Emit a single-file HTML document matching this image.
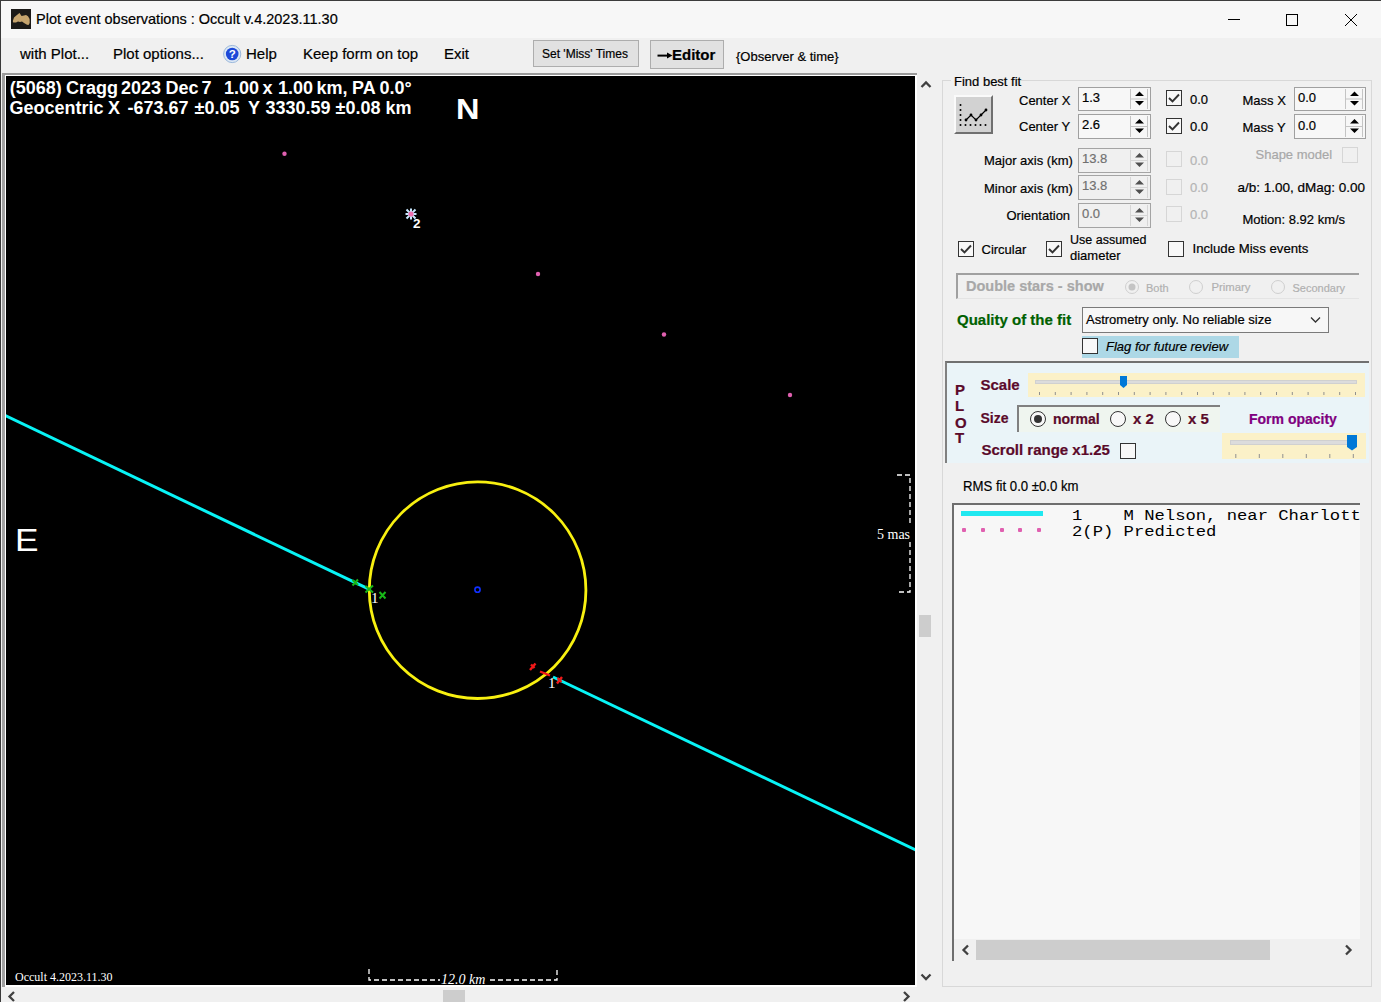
<!DOCTYPE html>
<html><head><meta charset="utf-8">
<style>
*{margin:0;padding:0;box-sizing:border-box}
html,body{width:1381px;height:1002px;overflow:hidden}
body{position:relative;background:#f0f0f0;font-family:"Liberation Sans",sans-serif;color:#000;font-size:13px}
.a{position:absolute;white-space:pre;line-height:1;-webkit-text-stroke:0.2px currentColor}
.nb{-webkit-text-stroke:0}
svg{position:absolute;overflow:visible}
</style></head><body>

<div class="a" style="left:0px;top:0px;width:1381px;height:1px;background:#3c3c3c"></div>
<div class="a" style="left:0px;top:0px;width:1px;height:1002px;background:#3a3a3a"></div>
<div class="a" style="left:1px;top:1px;width:1380px;height:37px;background:#f7f7f7"></div>
<div class="a" style="left:11px;top:9px;width:20px;height:20px;background:#1c1a18"></div>
<svg style="left:11px;top:9px" width="20" height="20"><path d="M1.8 12 L3 8.5 L5 6.8 L7.5 4.8 L8.6 4 L10 6.2 L10.6 7 L13 6.6 L15 6 L17 7.2 L18.6 10 L18.7 14 L17.5 16 L16 15.8 L13 14 L11 12.6 L9 13 L7 12.6 L5 13.4 L2.2 13.6 Z" fill="#c6a46e"/></svg>
<div class="a" style="left:36px;top:12.43px;font-size:14.5px;">Plot event observations : Occult v.4.2023.11.30</div>
<svg style="left:1228px;top:19px" width="13" height="2"><rect x="0" y="0" width="12" height="1" fill="#000"/></svg>
<svg style="left:1286px;top:14px" width="14" height="14"><rect x="0.5" y="0.5" width="11" height="11" fill="none" stroke="#000" stroke-width="1"/></svg>
<svg style="left:1345px;top:14px" width="14" height="14"><path d="M0 0 L12 12 M12 0 L0 12" stroke="#000" stroke-width="1"/></svg>
<div class="a" style="left:20px;top:46.30px;font-size:15px;">with Plot...</div>
<div class="a" style="left:113px;top:46.30px;font-size:15px;">Plot options...</div>
<svg style="left:222px;top:44px" width="20" height="20"><circle cx="10.2" cy="10" r="8.6" fill="#dce8f4" stroke="#9bb8dc" stroke-width="1"/><circle cx="10.2" cy="10" r="6.3" fill="#1c48d8"/><text x="10.2" y="14.2" font-size="11.5" font-weight="bold" fill="#fff" text-anchor="middle" font-family="Liberation Sans">?</text></svg>
<div class="a" style="left:246px;top:46.30px;font-size:15px;">Help</div>
<div class="a" style="left:303px;top:46.30px;font-size:15px;">Keep form on top</div>
<div class="a" style="left:444px;top:46.30px;font-size:15px;">Exit</div>
<div class="a" style="left:533px;top:40px;width:106px;height:27px;background:#e1e1e1;border:1px solid #adadad"></div>
<div class="a" style="left:542px;top:48.34px;font-size:12px;">Set 'Miss' Times</div>
<div class="a" style="left:650px;top:40px;width:74px;height:29px;background:#e1e1e1;border:1px solid #adadad"></div>
<svg style="left:657px;top:50px" width="17" height="12"><path d="M0.5 5.6 L11 5.6" stroke="#000" stroke-width="2"/><path d="M10 2.6 L15.5 5.6 L10 8.6 Z" fill="#000"/></svg>
<div class="a" style="left:672px;top:47.10px;font-size:15px;font-weight:bold">Editor</div>
<div class="a" style="left:736px;top:50.00px;font-size:13px;">{Observer &amp; time}</div>
<div class="a" style="left:2px;top:73px;width:915px;height:914px;background:#fff;border-top:2px solid #9a9a9a;border-left:3px solid #a0a0a0"></div>
<svg style="left:6px;top:76px;overflow:hidden" width="909" height="909" viewBox="6 76 909 909"><rect x="6" y="76" width="909" height="909" fill="#000"/>
<line x1="0" y1="413.1" x2="369.5" y2="589.4" stroke="#08f4f6" stroke-width="3"/>
<line x1="553" y1="677" x2="920" y2="852" stroke="#08f4f6" stroke-width="3"/>
<circle cx="477.6" cy="590.2" r="108.3" fill="none" stroke="#f8f010" stroke-width="2.8"/>
<circle cx="477.5" cy="589.7" r="2.6" fill="none" stroke="#1030ff" stroke-width="1.6"/>
<g fill="#e060b0"><circle cx="284.5" cy="153.8" r="2.2"/><circle cx="538" cy="274" r="2.2"/><circle cx="664" cy="334.5" r="2.2"/><circle cx="790" cy="395" r="2.2"/></g>
<path d="M406.5 209.5 L415.5 218.5 M415.5 209.5 L406.5 218.5 M411 208.5 L411 219.5 M405.5 214 L416.5 214" stroke="#c8e8ff" stroke-width="2"/>
<circle cx="411" cy="214" r="2.6" fill="#f070b0"/>
<text x="413" y="228" font-family="Liberation Sans" font-weight="bold" font-size="13.5" fill="#fff">2</text>
<g stroke="#18b818" stroke-width="2"><path d="M352.5 580 L358 585 M358 579.5 L352.5 585.5"/><path d="M365.5 586 L373 592.5 M373 585.5 L365.5 592.5"/><path d="M379.5 592 L385.5 598.5 M385.5 592 L379.5 598.5"/></g>
<text x="371" y="603" font-family="Liberation Serif" font-size="15" fill="#fff">1</text>
<g stroke="#f01818" stroke-width="2.4"><path d="M530 670 L535.5 663.5 M531 664.5 L534.5 668"/><path d="M540 671.5 L550 675.5"/><path d="M557 683.5 L562 677 M557.5 678 L561.5 682"/></g>
<text x="548" y="688" font-family="Liberation Serif" font-size="15" fill="#fff">1</text>
<text y="94" font-family="Liberation Sans" font-size="18" fill="#fff" font-weight="bold"><tspan x="9.8">(5068)</tspan><tspan x="66">Cragg</tspan><tspan x="121">2023</tspan><tspan x="165.5">Dec</tspan><tspan x="201.5">7</tspan><tspan x="224">1.00</tspan><tspan x="262.5">x</tspan><tspan x="278">1.00</tspan><tspan x="316.5">km,</tspan><tspan x="352">PA</tspan><tspan x="379.5">0.0°</tspan></text>
<text y="113.5" font-family="Liberation Sans" font-size="18" fill="#fff" font-weight="bold"><tspan x="9.5">Geocentric</tspan><tspan x="108">X</tspan><tspan x="127.5">-673.67</tspan><tspan x="194.5">±0.05</tspan><tspan x="248">Y</tspan><tspan x="265.5">3330.59</tspan><tspan x="335.5">±0.08</tspan><tspan x="385.5">km</tspan></text>
<text x="456" y="119" font-family="Liberation Sans" font-weight="bold" font-size="29.5" fill="#fff" textLength="23.5" lengthAdjust="spacingAndGlyphs">N</text>
<text x="15" y="550.5" font-family="Liberation Sans" font-size="30.5" fill="#fff" textLength="23.5" lengthAdjust="spacingAndGlyphs">E</text>
<path d="M897 475 L910 475 L910 592 L897 592" stroke="#fff" stroke-width="1.3" fill="none" stroke-dasharray="5,3"/>
<rect x="876" y="526" width="36" height="16" fill="#000"/>
<text x="877" y="539" font-family="Liberation Serif" font-size="14" fill="#fff">5 mas</text>
<path d="M369 969 L369 980 L440 980 M490 980 L557 980 L557 969" stroke="#fff" stroke-width="1.3" fill="none" stroke-dasharray="5,3"/>
<text x="441" y="984" font-family="Liberation Serif" font-style="italic" font-size="14" fill="#fff">12.0 km</text>
<text x="15" y="981" font-family="Liberation Serif" font-size="12" fill="#fff">Occult 4.2023.11.30</text></svg>
<svg style="left:918px;top:78px" width="16" height="12"><path d="M3.5 9 L8 4.5 L12.5 9" stroke="#404040" stroke-width="2.3" fill="none"/></svg>
<div class="a" style="left:919px;top:615px;width:12px;height:22px;background:#cdcdcd"></div>
<svg style="left:918px;top:971px" width="16" height="12"><path d="M3.5 3.5 L8 8 L12.5 3.5" stroke="#404040" stroke-width="2.3" fill="none"/></svg>
<svg style="left:4px;top:990px" width="14" height="12"><path d="M10 2 L5.5 6.5 L10 11" stroke="#404040" stroke-width="2.3" fill="none"/></svg>
<div class="a" style="left:443px;top:990px;width:22px;height:12px;background:#cdcdcd"></div>
<svg style="left:900px;top:990px" width="14" height="12"><path d="M4 2 L8.5 6.5 L4 11" stroke="#404040" stroke-width="2.3" fill="none"/></svg>
<div class="a" style="left:942px;top:80px;width:430px;height:907px;border:1px solid #d8d8d8"></div>
<div class="a" style="left:951px;top:74px;width:69px;height:13px;background:#f0f0f0"></div>
<div class="a" style="left:954px;top:75.00px;font-size:13px;">Find best fit</div>
<div class="a" style="left:954px;top:95px;width:39px;height:39px;background:#d2d2d2;border:2px solid;border-color:#fafafa #707070 #707070 #fafafa"></div>
<svg style="left:954px;top:95px" width="40" height="40"><g fill="#000"><circle cx="6.5" cy="10" r="1"/><circle cx="6.5" cy="15" r="1"/><circle cx="6.5" cy="20" r="1"/><circle cx="6.5" cy="25" r="1"/><circle cx="6.5" cy="30" r="1"/>
 <circle cx="11.5" cy="30" r="1"/><circle cx="16.5" cy="30" r="1"/><circle cx="21.5" cy="30" r="1"/><circle cx="26.5" cy="30" r="1"/><circle cx="31.5" cy="30" r="1"/>
 <circle cx="12" cy="25" r="1.4"/><circle cx="17" cy="20" r="1.4"/><circle cx="22" cy="25" r="1.4"/><circle cx="27" cy="20" r="1.4"/><circle cx="32" cy="15" r="1.4"/></g>
 <path d="M12 25 L17 20 L22 25 L27 20 L32 15" stroke="#000" stroke-width="1.2" fill="none"/></svg>
<div class="a" style="left:1019px;top:93.70px;font-size:13px;">Center X</div>
<div class="a" style="left:1019px;top:120.30px;font-size:13px;">Center Y</div>
<div class="a" style="left:1078px;top:87px;width:73px;height:24px;background:#f7f7f7;border:1px solid #a0a0a0"></div>
<div class="a" style="left:1082px;top:91.00px;font-size:13px;color:#000">1.3</div>
<svg style="left:1130px;top:87px" width="18" height="24"><rect x="0" y="2" width="1" height="20" fill="#c4c4c4"/><rect x="17" y="2" width="1" height="20" fill="#c4c4c4"/><rect x="1" y="11.5" width="16" height="1" fill="#c4c4c4"/><path d="M5.0 9.0 L9.5 4.5 L14.0 9.0 Z M5.0 14.0 L9.5 18.5 L14.0 14.0 Z" fill="#000"/></svg>
<div class="a" style="left:1078px;top:114px;width:73px;height:25px;background:#f7f7f7;border:1px solid #a0a0a0"></div>
<div class="a" style="left:1082px;top:118.00px;font-size:13px;color:#000">2.6</div>
<svg style="left:1130px;top:114px" width="18" height="25"><rect x="0" y="2" width="1" height="21" fill="#c4c4c4"/><rect x="17" y="2" width="1" height="21" fill="#c4c4c4"/><rect x="1" y="12.0" width="16" height="1" fill="#c4c4c4"/><path d="M5.0 9.5 L9.5 5.0 L14.0 9.5 Z M5.0 14.5 L9.5 19.0 L14.0 14.5 Z" fill="#000"/></svg>
<div class="a" style="left:1166px;top:90px;width:16px;height:16px;background:#f8f8f8;border:1px solid #333"></div>
<svg style="left:1166px;top:90px" width="16" height="16"><path d="M3 8 L6.5 11.5 L13 4.5" stroke="#333" stroke-width="1.9" fill="none"/></svg>
<div class="a" style="left:1166px;top:118px;width:16px;height:16px;background:#f8f8f8;border:1px solid #333"></div>
<svg style="left:1166px;top:118px" width="16" height="16"><path d="M3 8 L6.5 11.5 L13 4.5" stroke="#333" stroke-width="1.9" fill="none"/></svg>
<div class="a" style="left:1190px;top:92.70px;font-size:13px;">0.0</div>
<div class="a" style="left:1190px;top:120.20px;font-size:13px;">0.0</div>
<div class="a" style="left:1242.5px;top:93.80px;font-size:13px;">Mass X</div>
<div class="a" style="left:1242.5px;top:121.00px;font-size:13px;">Mass Y</div>
<div class="a" style="left:1294px;top:87px;width:72px;height:24px;background:#f7f7f7;border:1px solid #a0a0a0"></div>
<div class="a" style="left:1298px;top:91.40px;font-size:13px;color:#000">0.0</div>
<svg style="left:1345px;top:87px" width="18" height="24"><rect x="0" y="2" width="1" height="20" fill="#c4c4c4"/><rect x="17" y="2" width="1" height="20" fill="#c4c4c4"/><rect x="1" y="11.5" width="16" height="1" fill="#c4c4c4"/><path d="M5.0 9.0 L9.5 4.5 L14.0 9.0 Z M5.0 14.0 L9.5 18.5 L14.0 14.0 Z" fill="#000"/></svg>
<div class="a" style="left:1294px;top:114px;width:72px;height:25px;background:#f7f7f7;border:1px solid #a0a0a0"></div>
<div class="a" style="left:1298px;top:118.50px;font-size:13px;color:#000">0.0</div>
<svg style="left:1345px;top:114px" width="18" height="25"><rect x="0" y="2" width="1" height="21" fill="#c4c4c4"/><rect x="17" y="2" width="1" height="21" fill="#c4c4c4"/><rect x="1" y="12.0" width="16" height="1" fill="#c4c4c4"/><path d="M5.0 9.5 L9.5 5.0 L14.0 9.5 Z M5.0 14.5 L9.5 19.0 L14.0 14.5 Z" fill="#000"/></svg>
<div class="a" style="left:984px;top:154.40px;font-size:13px;">Major axis (km)</div>
<div class="a" style="left:984px;top:181.50px;font-size:13px;">Minor axis (km)</div>
<div class="a" style="left:1006.5px;top:208.50px;font-size:13px;">Orientation</div>
<div class="a" style="left:1078px;top:148px;width:73px;height:25px;background:#f0f0f0;border:1px solid #a4a4a4"></div>
<div class="a" style="left:1082px;top:152.30px;font-size:13px;color:#707070">13.8</div>
<svg style="left:1130px;top:148px" width="18" height="25"><rect x="0" y="2" width="1" height="21" fill="#d6d6d6"/><rect x="17" y="2" width="1" height="21" fill="#d6d6d6"/><rect x="1" y="12.0" width="16" height="1" fill="#d6d6d6"/><path d="M5.0 9.5 L9.5 5.0 L14.0 9.5 Z M5.0 14.5 L9.5 19.0 L14.0 14.5 Z" fill="#505050"/></svg>
<div class="a" style="left:1078px;top:175px;width:73px;height:25px;background:#f0f0f0;border:1px solid #a4a4a4"></div>
<div class="a" style="left:1082px;top:179.30px;font-size:13px;color:#707070">13.8</div>
<svg style="left:1130px;top:175px" width="18" height="25"><rect x="0" y="2" width="1" height="21" fill="#d6d6d6"/><rect x="17" y="2" width="1" height="21" fill="#d6d6d6"/><rect x="1" y="12.0" width="16" height="1" fill="#d6d6d6"/><path d="M5.0 9.5 L9.5 5.0 L14.0 9.5 Z M5.0 14.5 L9.5 19.0 L14.0 14.5 Z" fill="#505050"/></svg>
<div class="a" style="left:1078px;top:203px;width:73px;height:25px;background:#f0f0f0;border:1px solid #a4a4a4"></div>
<div class="a" style="left:1082px;top:206.80px;font-size:13px;color:#707070">0.0</div>
<svg style="left:1130px;top:203px" width="18" height="25"><rect x="0" y="2" width="1" height="21" fill="#d6d6d6"/><rect x="17" y="2" width="1" height="21" fill="#d6d6d6"/><rect x="1" y="12.0" width="16" height="1" fill="#d6d6d6"/><path d="M5.0 9.5 L9.5 5.0 L14.0 9.5 Z M5.0 14.5 L9.5 19.0 L14.0 14.5 Z" fill="#505050"/></svg>
<div class="a" style="left:1166px;top:151px;width:16px;height:16px;border:1px solid #d6d6d6"></div>
<div class="a" style="left:1166px;top:179px;width:16px;height:16px;border:1px solid #d6d6d6"></div>
<div class="a" style="left:1166px;top:206px;width:16px;height:16px;border:1px solid #d6d6d6"></div>
<div class="a" style="left:1190px;top:153.50px;font-size:13px;color:#b4b4b4">0.0</div>
<div class="a" style="left:1190px;top:181.00px;font-size:13px;color:#b4b4b4">0.0</div>
<div class="a" style="left:1190px;top:208.00px;font-size:13px;color:#b4b4b4">0.0</div>
<div class="a" style="left:1255.5px;top:148.20px;font-size:13px;color:#a8a8a8">Shape model</div>
<div class="a" style="left:1342px;top:147px;width:16px;height:16px;border:1px solid #d6d6d6"></div>
<div class="a" style="left:1237.5px;top:181.37px;font-size:13.5px;">a/b: 1.00, dMag: 0.00</div>
<div class="a" style="left:1242.5px;top:213.00px;font-size:13px;">Motion: 8.92 km/s</div>
<div class="a" style="left:958px;top:241px;width:16px;height:16px;background:#f8f8f8;border:1px solid #333"></div>
<svg style="left:958px;top:241px" width="16" height="16"><path d="M3 8 L6.5 11.5 L13 4.5" stroke="#333" stroke-width="1.9" fill="none"/></svg>
<div class="a" style="left:981.5px;top:242.60px;font-size:13px;">Circular</div>
<div class="a" style="left:1046px;top:241px;width:16px;height:16px;background:#f8f8f8;border:1px solid #333"></div>
<svg style="left:1046px;top:241px" width="16" height="16"><path d="M3 8 L6.5 11.5 L13 4.5" stroke="#333" stroke-width="1.9" fill="none"/></svg>
<div class="a" style="left:1070px;top:233.92px;font-size:12.5px;">Use assumed</div>
<div class="a" style="left:1070px;top:249.20px;font-size:13px;">diameter</div>
<div class="a" style="left:1168px;top:241px;width:16px;height:16px;background:#f8f8f8;border:1px solid #333"></div>
<div class="a" style="left:1192.5px;top:242.33px;font-size:13.2px;">Include Miss events</div>
<div class="a" style="left:956px;top:273px;width:403px;height:26px;border-top:2px solid #a0a0a0;border-left:2px solid #a0a0a0;border-bottom:1px solid #e4e4e4"></div>
<div class="a" style="left:966px;top:278.73px;font-size:14.5px;font-weight:bold;color:#a8a8a8">Double stars - show</div>
<svg style="left:1124px;top:279px" width="16" height="16"><circle cx="8" cy="8" r="6.5" fill="none" stroke="#cfcfcf" stroke-width="1"/><circle cx="8" cy="8" r="3.5" fill="#c4c4c4"/></svg>
<div class="a" style="left:1146px;top:282.69px;font-size:11px;color:#b0b0b0">Both</div>
<svg style="left:1188px;top:279px" width="16" height="16"><circle cx="8" cy="8" r="6.5" fill="none" stroke="#cfcfcf" stroke-width="1"/></svg>
<div class="a" style="left:1211.5px;top:282.43px;font-size:11.3px;color:#b0b0b0">Primary</div>
<svg style="left:1269.5px;top:279px" width="16" height="16"><circle cx="8" cy="8" r="6.5" fill="none" stroke="#cfcfcf" stroke-width="1"/></svg>
<div class="a" style="left:1292.5px;top:282.69px;font-size:11px;color:#b0b0b0">Secondary</div>
<div class="a" style="left:957px;top:311.70px;font-size:15px;font-weight:bold;color:#006000">Quality of the fit</div>
<div class="a" style="left:1082px;top:307px;width:247px;height:26px;background:#f7f7f7;border:1px solid #7a7a7a"></div>
<div class="a" style="left:1086px;top:312.50px;font-size:13px;">Astrometry only. No reliable size</div>
<svg style="left:1309px;top:314px" width="14" height="12"><path d="M2 3.5 L6.5 8 L11 3.5" stroke="#333" stroke-width="1.3" fill="none"/></svg>
<div class="a" style="left:1082px;top:336px;width:157px;height:22px;background:#add8e6"></div>
<div class="a" style="left:1082px;top:338px;width:16px;height:16px;background:#f8f8f8;border:1px solid #333"></div>
<div class="a" style="left:1106px;top:339.50px;font-size:13px;font-style:italic">Flag for future review</div>
<div class="a" style="left:945px;top:361px;width:424px;height:102px;background:#eaf4f8;border-top:2px solid #707070;border-left:2px solid #808080"></div>
<div class="a" style="left:955px;top:382.30px;font-size:15px;font-weight:bold;color:#5a0a2a">P</div>
<div class="a" style="left:955px;top:398.30px;font-size:15px;font-weight:bold;color:#5a0a2a">L</div>
<div class="a" style="left:955px;top:415.30px;font-size:15px;font-weight:bold;color:#5a0a2a">O</div>
<div class="a" style="left:955px;top:430.30px;font-size:15px;font-weight:bold;color:#5a0a2a">T</div>
<div class="a" style="left:980.5px;top:377.10px;font-size:15px;font-weight:bold;color:#5a0a2a">Scale</div>
<div class="a" style="left:980.5px;top:411.15px;font-size:14px;font-weight:bold;color:#5a0a2a">Size</div>
<div class="a" style="left:981.5px;top:442.30px;font-size:15px;font-weight:bold;color:#5a0a2a">Scroll range x1.25</div>
<div class="a" style="left:1028px;top:373px;width:337px;height:24px;background:#fbf1c8"></div>
<div class="a" style="left:1035px;top:380px;width:322px;height:4px;background:#dcdcdc;border:1px solid #d0d0d0"></div>
<svg style="left:1028px;top:373px" width="337" height="24"><rect x="11.0" y="19" width="1" height="3" fill="#909090"/><rect x="26.8" y="19" width="1" height="3" fill="#909090"/><rect x="42.6" y="19" width="1" height="3" fill="#909090"/><rect x="58.4" y="19" width="1" height="3" fill="#909090"/><rect x="74.2" y="19" width="1" height="3" fill="#909090"/><rect x="90.0" y="19" width="1" height="3" fill="#909090"/><rect x="105.8" y="19" width="1" height="3" fill="#909090"/><rect x="121.6" y="19" width="1" height="3" fill="#909090"/><rect x="137.4" y="19" width="1" height="3" fill="#909090"/><rect x="153.2" y="19" width="1" height="3" fill="#909090"/><rect x="169.0" y="19" width="1" height="3" fill="#909090"/><rect x="184.8" y="19" width="1" height="3" fill="#909090"/><rect x="200.6" y="19" width="1" height="3" fill="#909090"/><rect x="216.4" y="19" width="1" height="3" fill="#909090"/><rect x="232.2" y="19" width="1" height="3" fill="#909090"/><rect x="248.0" y="19" width="1" height="3" fill="#909090"/><rect x="263.8" y="19" width="1" height="3" fill="#909090"/><rect x="279.6" y="19" width="1" height="3" fill="#909090"/><rect x="295.4" y="19" width="1" height="3" fill="#909090"/><rect x="311.2" y="19" width="1" height="3" fill="#909090"/><rect x="327.0" y="19" width="1" height="3" fill="#909090"/><path d="M92 3 L99 3 L99 12 L95.5 15 L92 12 Z" fill="#0078d7"/></svg>
<div class="a" style="left:1017px;top:405px;width:203px;height:27px;background:#eff5ef;border-top:2px solid #808080;border-left:2px solid #808080"></div>
<svg style="left:1029px;top:410px" width="18" height="18"><circle cx="9" cy="9" r="7.5" fill="#f8f8f8" stroke="#333" stroke-width="1"/><circle cx="9" cy="9" r="4.0" fill="#333"/></svg>
<div class="a" style="left:1053px;top:411.65px;font-size:14px;font-weight:bold;color:#5a0a2a">normal</div>
<svg style="left:1108.5px;top:410px" width="18" height="18"><circle cx="9" cy="9" r="7.5" fill="#f8f8f8" stroke="#333" stroke-width="1"/></svg>
<div class="a" style="left:1133px;top:410.80px;font-size:15px;font-weight:bold;color:#5a0a2a">x 2</div>
<svg style="left:1163.5px;top:410px" width="18" height="18"><circle cx="9" cy="9" r="7.5" fill="#f8f8f8" stroke="#333" stroke-width="1"/></svg>
<div class="a" style="left:1188px;top:410.80px;font-size:15px;font-weight:bold;color:#5a0a2a">x 5</div>
<div class="a" style="left:1249px;top:412.15px;font-size:14px;font-weight:bold;color:#800080">Form opacity</div>
<div class="a" style="left:1222px;top:433px;width:144px;height:26px;background:#fbf1c8"></div>
<div class="a" style="left:1230px;top:440px;width:118px;height:5px;background:#dcdcdc;border:1px solid #d0d0d0"></div>
<svg style="left:1222px;top:433px" width="144" height="26"><rect x="13.3" y="21" width="1" height="4" fill="#909090"/><rect x="36.8" y="21" width="1" height="4" fill="#909090"/><rect x="60.3" y="21" width="1" height="4" fill="#909090"/><rect x="83.8" y="21" width="1" height="4" fill="#909090"/><rect x="107.3" y="21" width="1" height="4" fill="#909090"/><rect x="130.8" y="21" width="1" height="4" fill="#909090"/><path d="M125 2 L135 2 L135 14 L130 17.5 L125 14 Z" fill="#0078d7"/></svg>
<div class="a" style="left:1120px;top:443px;width:16px;height:16px;background:#f8f8f8;border:1px solid #333"></div>
<div class="a" style="left:962.5px;top:478.30px;font-size:15px;transform:scaleX(0.878);transform-origin:0 0">RMS fit 0.0 ±0.0 km</div>
<div class="a" style="left:952px;top:503px;width:408px;height:458px;background:#f7f7f7;border-top:2px solid #6e6e6e;border-left:2px solid #6e6e6e"></div>
<div class="a" style="left:961px;top:511px;width:82px;height:5px;background:#20e8f0"></div>
<div class="a" style="left:962px;top:528px;width:4px;height:4px;background:#e060b0;border-radius:1px"></div>
<div class="a" style="left:981px;top:528px;width:4px;height:4px;background:#e060b0;border-radius:1px"></div>
<div class="a" style="left:999.5px;top:528px;width:4px;height:4px;background:#e060b0;border-radius:1px"></div>
<div class="a" style="left:1018px;top:528px;width:4px;height:4px;background:#e060b0;border-radius:1px"></div>
<div class="a" style="left:1037px;top:528px;width:4px;height:4px;background:#e060b0;border-radius:1px"></div>
<div class="a" style="left:1072px;top:507.44px;font-size:17.2px;font-family:'Liberation Mono',monospace;-webkit-text-stroke:0;transform:scaleY(0.9);transform-origin:0 13.18px">1    M Nelson, near Charlott</div>
<div class="a" style="left:1072px;top:522.94px;font-size:17.2px;font-family:'Liberation Mono',monospace;-webkit-text-stroke:0;transform:scaleY(0.9);transform-origin:0 13.18px">2(P) Predicted</div>
<div class="a" style="left:954px;top:939px;width:406px;height:22px;background:#f0f0f0"></div>
<svg style="left:958px;top:943px" width="14" height="14"><path d="M10 2.5 L5.5 7 L10 11.5" stroke="#404040" stroke-width="2.3" fill="none"/></svg>
<div class="a" style="left:976px;top:940px;width:294px;height:20px;background:#cdcdcd"></div>
<svg style="left:1342px;top:943px" width="14" height="14"><path d="M4 2.5 L8.5 7 L4 11.5" stroke="#404040" stroke-width="2.3" fill="none"/></svg>
</body></html>
